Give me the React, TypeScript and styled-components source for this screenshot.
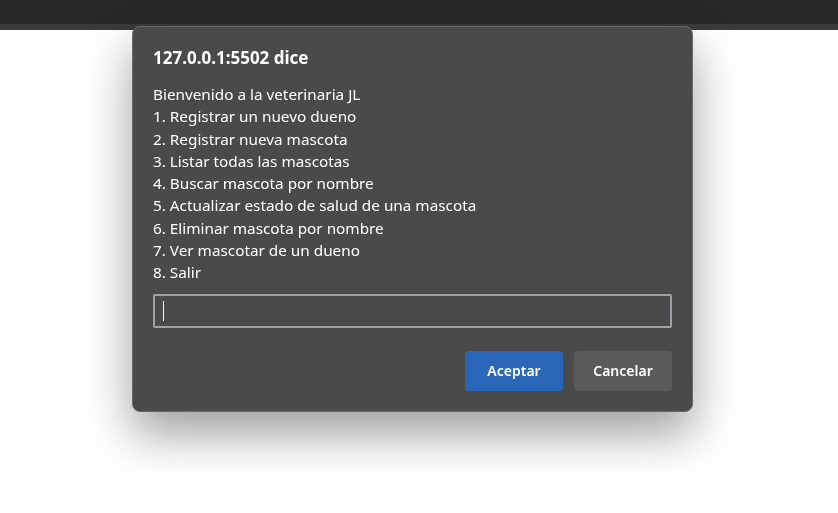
import styled, { createGlobalStyle } from 'styled-components'

const GlobalStyle = createGlobalStyle`
  html, body {
    margin: 0;
    padding: 0;
    background: #ffffff;
    font-family: "Segoe UI", "Noto Sans", "Open Sans", sans-serif;
  }
`

const options = [
  'Bienvenido a la veterinaria JL',
  '1. Registrar un nuevo dueno',
  '2. Registrar nueva mascota',
  '3. Listar todas las mascotas',
  '4. Buscar mascota por nombre',
  '5. Actualizar estado de salud de una mascota',
  '6. Eliminar mascota por nombre',
  '7. Ver mascotar de un dueno',
  '8. Salir',
]

export default function App() {
  return (
    <>
      <GlobalStyle />
      <Page>
        <TopBar />
      </Page>
      <Dialog>
        <Title>127.0.0.1:5502 dice</Title>
        <Message>
          {options.map((line) => (
            <Line key={line}>{line}</Line>
          ))}
        </Message>
        <InputBox>
          <Caret />
        </InputBox>
        <Footer>
          <Button primary>Aceptar</Button>
          <Button>Cancelar</Button>
        </Footer>
      </Dialog>
    </>
  )
}

const Page = styled.div`
  width: 100%;
  height: 513px;
  background: #ffffff;
`

const TopBar = styled.div`
  height: 24px;
  background: #282828;
  border-bottom: 6px solid #3a3a3a;
`

const Dialog = styled.div`
  position: fixed;
  top: 26px;
  left: 132px;
  width: 561px;
  box-sizing: border-box;
  padding: 20px 20px 20px 20px;
  background: #4a4a4a;
  border: 1px solid #6a6a6a;
  border-radius: 8px;
  box-shadow: 0 22px 48px rgba(0, 0, 0, 0.38);
  color: #ffffff;
  display: flex;
  flex-direction: column;
`

const Title = styled.div`
  font-size: 17px;
  font-weight: 700;
  line-height: 22px;
  margin-bottom: 14px;
`

const Message = styled.div`
  font-size: 15.3px;
  line-height: 22.3px;
  margin-bottom: 10px;
`

const Line = styled.div`
  white-space: nowrap;
`

const InputBox = styled.div`
  height: 34px;
  box-sizing: border-box;
  border: 2px solid #9ea2a6;
  border-radius: 2px;
  background: #4a4a4a;
  display: flex;
  align-items: center;
  padding-left: 8px;
`

const Caret = styled.div`
  width: 1px;
  height: 20px;
  background: #ffffff;
`

const Footer = styled.div`
  display: flex;
  justify-content: flex-end;
  gap: 11px;
  margin-top: 23px;
`

const Button = styled.button<{ primary?: boolean }>`
  width: 98px;
  height: 40px;
  border: none;
  border-radius: 4px;
  background: ${({ primary }) => (primary ? '#2b67b8' : '#5a5a5a')};
  color: #ffffff;
  font-family: inherit;
  font-size: 14px;
  font-weight: 600;
  cursor: pointer;
`
